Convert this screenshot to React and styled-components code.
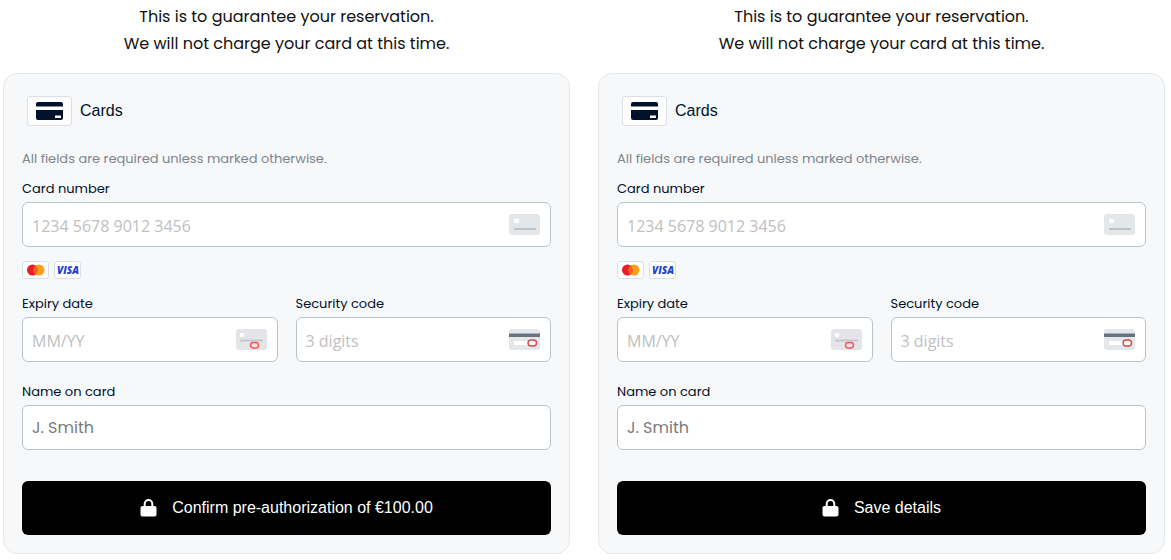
import React, { useId } from 'react';
import styled, { createGlobalStyle } from 'styled-components';

const GlobalStyle = createGlobalStyle`
  * {
    box-sizing: border-box;
  }

  body {
    margin: 0;
    background: #ffffff;
    font-family: Poppins, Inter, sans-serif;
  }
`;

const Page = styled.main`
  display: flex;
  gap: 28px;
  padding: 3px 6px 6px 3px;
`;

const Column = styled.section`
  flex: 1;
  min-width: 0;
`;

const Intro = styled.p`
  margin: 0 0 16px;
  font-size: 16px;
  line-height: 27px;
  text-align: center;
  color: #111111;
`;

const Panel = styled.form`
  padding: 22px 18px 18px;
  border: 1px solid #e6e9eb;
  border-radius: 14px;
  background: #f7f8f9;
  color: #00112c;
`;

const Method = styled.div`
  display: flex;
  align-items: center;
  gap: 8px;
  padding-left: 5px;
  font-family: Arial, 'Liberation Sans', sans-serif;
  font-size: 16px;
`;

const MethodIcon = styled.span`
  display: flex;
  align-items: center;
  justify-content: center;
  width: 45px;
  height: 30px;
  border: 1px solid #dce0e5;
  border-radius: 3px;
  background: #ffffff;
`;

const Hint = styled.p`
  margin: 23px 0 10px;
  font-size: 13px;
  line-height: 20px;
  color: #7d858c;
`;

const FieldGroup = styled.div`
  flex: 1;
  min-width: 0;
`;

const FieldRow = styled.div`
  display: flex;
  gap: 18px;
  margin-bottom: 20px;
`;

const Label = styled.label`
  display: block;
  margin-bottom: 3px;
  font-size: 13px;
  line-height: 20px;
`;

const InputBox = styled.div`
  display: flex;
  align-items: center;
  height: 45px;
  padding: 0 10px 0 9px;
  border: 1px solid #b9c4c9;
  border-radius: 6px;
  background: #ffffff;
`;

const Input = styled.input`
  flex: 1;
  min-width: 0;
  height: 100%;
  padding: ${({ $secure }) => ($secure ? '2px 0 0' : '0')};
  border: 0;
  outline: 0;
  background: transparent;
  font-family: ${({ $secure }) => ($secure ? "'Open Sans', sans-serif" : 'Poppins, Inter, sans-serif')};
  font-size: 16px;
  color: #00112c;

  &::placeholder {
    color: ${({ $secure }) => ($secure ? '#c0c0c0' : '#7a7a7a')};
    opacity: 1;
  }
`;

const Brands = styled.div`
  display: flex;
  gap: 5px;
  margin: 14px 0 15px;
`;

const Brand = styled.span`
  display: flex;
  width: 27px;
  height: 18px;
  border: 1px solid #dce0e5;
  border-radius: 3px;
  background: #ffffff;
`;

const PayButton = styled.button`
  display: flex;
  align-items: center;
  justify-content: center;
  gap: 15px;
  width: 100%;
  height: 54px;
  margin-top: 31px;
  border: 0;
  border-radius: 6px;
  background: #000000;
  color: #ffffff;
  font-family: Arial, 'Liberation Sans', sans-serif;
  font-size: 16px;
  cursor: pointer;

  &:hover {
    background: #1c1c1c;
  }
`;

const CardIcon = () => (
  <svg width="27" height="18" viewBox="0 0 27 18" aria-hidden="true">
    <path d="M2 0h23a2 2 0 0 1 2 2v2.5H0V2a2 2 0 0 1 2-2z" fill="#00112c" />
    <path d="M0 8h27v8a2 2 0 0 1-2 2H2a2 2 0 0 1-2-2z" fill="#00112c" />
    <path d="M19 13.5h6v2.5h-6z" fill="#ffffff" />
  </svg>
);

const NumberIcon = () => (
  <svg width="31" height="21" viewBox="0 0 31 21" aria-hidden="true">
    <rect width="31" height="21" rx="3" fill="#e3e7ea" />
    <rect x="5" y="5" width="5" height="4" rx="1" fill="#ffffff" />
    <path d="M5 14h22v2H5z" fill="#b9c4c9" />
  </svg>
);

const ExpiryIcon = () => (
  <svg width="31" height="21" viewBox="0 0 31 21" aria-hidden="true">
    <rect width="31" height="21" rx="3" fill="#e4e4e9" />
    <rect x="4" y="4" width="4" height="4" rx="1" fill="#ffffff" />
    <path d="M4 10.5h23v2H4z" fill="#c7c7cc" />
    <rect x="14.5" y="13.5" width="8" height="5.5" rx="2.75" fill="#e4e4e9" stroke="#ff5552" strokeWidth="1.4" />
  </svg>
);

const SecurityIcon = () => (
  <svg width="31" height="21" viewBox="0 0 31 21" aria-hidden="true">
    <rect width="31" height="21" rx="3" fill="#e3e7ea" />
    <path d="M0 4.5h31v3.5H0z" fill="#687282" />
    <path d="M5 12h17v4H5z" fill="#ffffff" />
    <rect x="19" y="11" width="8.5" height="6" rx="3" fill="#ffffff" stroke="#d8494f" strokeWidth="1.4" />
  </svg>
);

const MastercardLogo = () => (
  <svg width="25" height="16" viewBox="0 0 25 16" role="img" aria-label="Mastercard">
    <circle cx="9.5" cy="8" r="5.5" fill="#eb1c26" />
    <circle cx="16" cy="8" r="5.5" fill="#f99f1b" />
    <path d="M12.75 3.56a5.5 5.5 0 0 1 0 8.88a5.5 5.5 0 0 1 0-8.88z" fill="#f26122" />
  </svg>
);

const VisaLogo = () => (
  <svg width="25" height="16" viewBox="0 0 25 16" role="img" aria-label="Visa">
    <text
      x="13"
      y="12"
      textAnchor="middle"
      fill="#1e3fd0"
      fontFamily="'Open Sans', sans-serif"
      fontSize="10"
      fontStyle="italic"
      fontWeight="800"
    >
      VISA
    </text>
  </svg>
);

const LockIcon = () => (
  <svg width="17" height="18" viewBox="0 0 17 18" aria-hidden="true">
    <path d="M4.7 8V4.8a3.8 3.8 0 0 1 7.6 0V8" fill="none" stroke="#ffffff" strokeWidth="2" />
    <rect x="0.5" y="7" width="16" height="10.5" rx="2" fill="#ffffff" />
  </svg>
);

const Field = ({ label, placeholder, icon, secure }) => {
  const id = useId();

  return (
    <FieldGroup>
      <Label htmlFor={id}>{label}</Label>
      <InputBox>
        <Input id={id} type="text" placeholder={placeholder} $secure={secure} />
        {icon}
      </InputBox>
    </FieldGroup>
  );
};

const CardForm = ({ action }) => (
  <Column>
    <Intro>
      This is to guarantee your reservation.
      <br />
      We will not charge your card at this time.
    </Intro>
    <Panel onSubmit={(e) => e.preventDefault()}>
      <Method>
        <MethodIcon>
          <CardIcon />
        </MethodIcon>
        Cards
      </Method>
      <Hint>All fields are required unless marked otherwise.</Hint>
      <Field label="Card number" placeholder="1234 5678 9012 3456" icon={<NumberIcon />} secure />
      <Brands>
        <Brand>
          <MastercardLogo />
        </Brand>
        <Brand>
          <VisaLogo />
        </Brand>
      </Brands>
      <FieldRow>
        <Field label="Expiry date" placeholder="MM/YY" icon={<ExpiryIcon />} secure />
        <Field label="Security code" placeholder="3 digits" icon={<SecurityIcon />} secure />
      </FieldRow>
      <Field label="Name on card" placeholder="J. Smith" />
      <PayButton type="submit">
        <LockIcon />
        {action}
      </PayButton>
    </Panel>
  </Column>
);

const App = () => (
  <>
    <GlobalStyle />
    <Page>
      <CardForm action="Confirm pre-authorization of €100.00" />
      <CardForm action="Save details" />
    </Page>
  </>
);

export default App;
